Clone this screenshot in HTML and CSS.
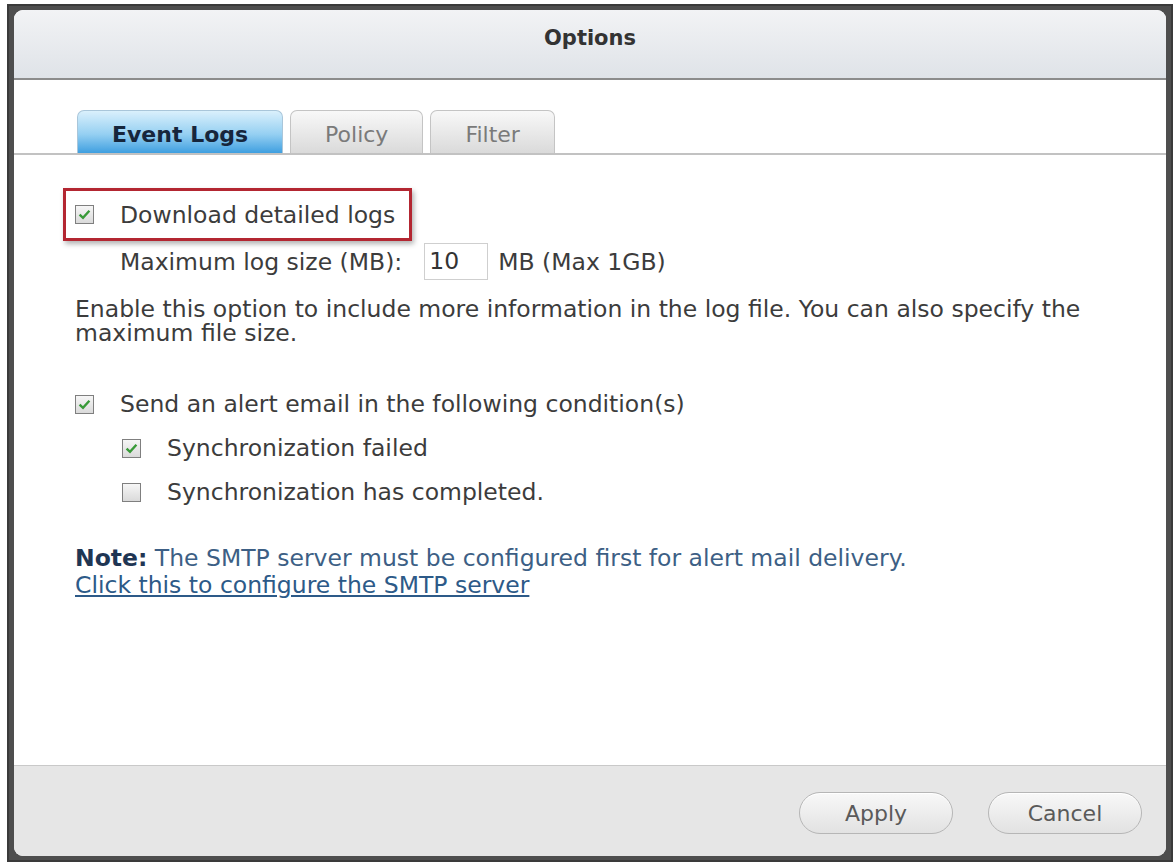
FILE: index.html
```html
<!DOCTYPE html>
<html lang="en">
<head>
    <meta charset="UTF-8">
    <title>Options</title>
    <link rel="stylesheet" href="styles.css">
</head>
<body>
    <div class="screen">
        <div class="frame">
            <div class="dialog">
                <div class="dialog-title">Options</div>

                <div class="dialog-body">
                    <div class="tabs">
                        <div class="tab active">Event Logs</div>
                        <div class="tab">Policy</div>
                        <div class="tab">Filter</div>
                    </div>

                    <div class="panel">
                        <div class="highlight">
                            <label class="check-row">
                                <span class="checkbox checked">
                                    <svg viewBox="0 0 17 17"><path d="M3.6 8.6 L7 11.8 L13.4 4.8"/></svg>
                                </span>
                                Download detailed logs
                            </label>
                        </div>
                        <div class="size-row">
                            Maximum log size (MB):
                            <span class="input">10</span>
                            MB (Max 1GB)
                        </div>
                        <p class="hint">Enable this option to include more information in the log file. You can also specify the maximum file size.</p>

                        <label class="check-row alert-row">
                            <span class="checkbox checked">
                                <svg viewBox="0 0 17 17"><path d="M3.6 8.6 L7 11.8 L13.4 4.8"/></svg>
                            </span>
                            Send an alert email in the following condition(s)
                        </label>
                        <div class="sub-options">
                            <label class="check-row">
                                <span class="checkbox checked">
                                    <svg viewBox="0 0 17 17"><path d="M3.6 8.6 L7 11.8 L13.4 4.8"/></svg>
                                </span>
                                Synchronization failed
                            </label>
                            <label class="check-row">
                                <span class="checkbox"></span>
                                Synchronization has completed.
                            </label>
                        </div>

                        <p class="note"><b>Note:</b> The SMTP server must be configured first for alert mail delivery.<br>
                        <a href="#">Click this to configure the SMTP server</a></p>
                    </div>
                </div>

                <div class="dialog-footer">
                    <button class="btn">Apply</button>
                    <button class="btn">Cancel</button>
                </div>
            </div>
        </div>
    </div>
</body>
</html>
```

FILE: styles.css
```css
body {
    margin: 0;
    background: #ffffff;
    font-family: "DejaVu Sans", Verdana, sans-serif;
    color: #3c3c3c;
}
.screen {
    padding: 4px 3px 3px 7px;
}
.frame {
    background: #4e4e4e;
    padding: 6px 7px 6px 7px;
    box-shadow: inset 0 0 0 2px #3a3a3a;
}
.dialog {
    display: flex;
    flex-direction: column;
    height: 846px;
    background: #ffffff;
    border-radius: 9px;
    overflow: hidden;
}
.dialog-title {
    height: 70px;
    box-sizing: border-box;
    padding-top: 15px;
    line-height: 26px;
    text-align: center;
    font-size: 21px;
    font-weight: bold;
    color: #333333;
    background: linear-gradient(#f2f3f5, #dfe3e8);
    border-bottom: 2px solid #8c8c8c;
}
.dialog-body {
    flex: 1;
    display: flex;
    flex-direction: column;
}
.tabs {
    display: flex;
    gap: 7px;
    padding: 30px 0 0 63px;
    border-bottom: 2px solid #c2c2c2;
}
.tab {
    height: 43px;
    box-sizing: border-box;
    padding: 5px 34px 0 34px;
    line-height: 38px;
    font-size: 22px;
    color: #7a7a7a;
    border: 1px solid #c4c4c4;
    border-bottom: none;
    border-radius: 7px 7px 0 0;
    background: linear-gradient(#f8f8f8, #dadada);
}
.tab.active {
    font-weight: bold;
    color: #16263c;
    border-color: #a9c6da;
    background: linear-gradient(#daf0fc, #96d0f2 55%, #3f9fe0);
}
.panel {
    padding: 0 0 0 61px;
    font-size: 23.5px;
}
.check-row {
    display: flex;
    align-items: center;
    gap: 26px;
    height: 30px;
}
.checkbox {
    width: 19px;
    height: 19px;
    flex: none;
    box-sizing: border-box;
    border: 1px solid #7f7f7f;
    background: linear-gradient(#f6f6f6, #dadada);
    display: flex;
}
.checkbox svg {
    width: 17px;
    height: 17px;
    fill: none;
    stroke: #389a38;
    stroke-width: 2.4;
}
.highlight {
    display: inline-block;
    margin: 33px 0 0 -12px;
    padding: 0 14px 0 9px;
    border: 3px solid #b32631;
    box-shadow: 2px 3px 5px rgba(0, 0, 0, 0.3);
}
.highlight .check-row {
    height: 47px;
}
.size-row {
    display: flex;
    align-items: center;
    margin-top: 2px;
    padding-left: 45px;
    height: 37px;
}
.input {
    width: 64px;
    height: 37px;
    box-sizing: border-box;
    margin: 0 10px 0 22px;
    padding-left: 4px;
    line-height: 35px;
    border: 1px solid #cfcfcf;
    color: #333333;
}
.hint {
    margin: 17px 0 0 0;
    width: 1030px;
    line-height: 24px;
}
.alert-row {
    margin-top: 44px;
}
.sub-options {
    padding-left: 47px;
}
.sub-options .check-row {
    margin-top: 14px;
}
.note {
    margin: 38px 0 0 0;
    line-height: 27px;
    color: #3d5f85;
}
.note b {
    color: #1f3654;
}
.note a {
    color: #2d5a88;
}
.dialog-footer {
    height: 91px;
    box-sizing: border-box;
    border-top: 1px solid #c9c9c9;
    background: #e6e6e6;
    display: flex;
    justify-content: flex-end;
    align-items: flex-start;
    gap: 35px;
    padding: 26px 24px 0 0;
}
.btn {
    width: 154px;
    height: 42px;
    border: 1px solid #b6b6b6;
    border-radius: 21px;
    background: linear-gradient(#f8f8f8, #e2e2e2);
    box-shadow: inset 0 1px 0 #ffffff;
    font-family: "DejaVu Sans", Verdana, sans-serif;
    font-size: 22px;
    color: #5a5a5a;
}
```
